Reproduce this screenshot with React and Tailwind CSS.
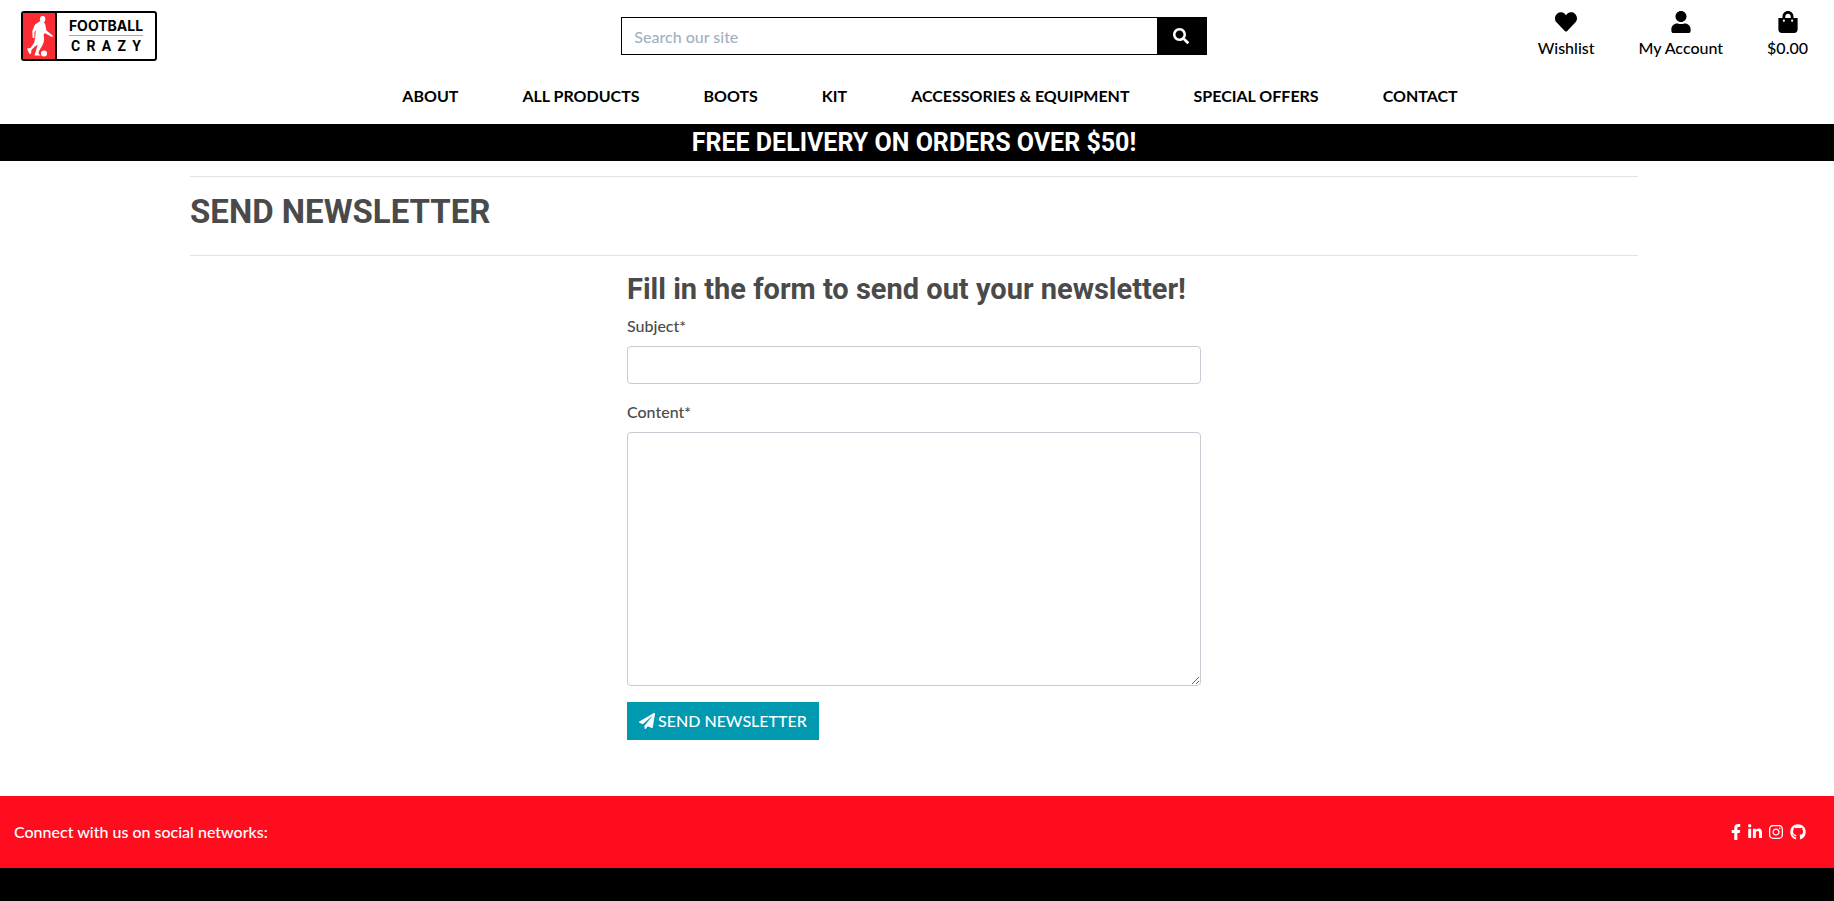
import React from "react";
import { FaSearch, FaHeart, FaUser, FaShoppingBag, FaPaperPlane, FaFacebookF, FaLinkedinIn, FaInstagram, FaGithub } from "react-icons/fa";

const NAV = ["About", "All Products", "Boots", "Kit", "Accessories & Equipment", "Special Offers", "Contact"];

const ACCOUNT_LINKS = [
  { label: "Wishlist", Icon: FaHeart },
  { label: "My Account", Icon: FaUser },
  { label: "$0.00", Icon: FaShoppingBag },
];

const SOCIAL = [
  { label: "Facebook", Icon: FaFacebookF, width: "w-[10px]" },
  { label: "LinkedIn", Icon: FaLinkedinIn, width: "w-[14px]" },
  { label: "Instagram", Icon: FaInstagram, width: "w-[14px]" },
  { label: "GitHub", Icon: FaGithub, width: "w-4" },
];

function Logo() {
  return (
    <a href="#" aria-label="Football Crazy" className="flex h-[50px] w-[136px] rounded-[3px] border-2 border-black bg-white">
      <span className="w-[34px] border-r-2 border-black bg-[#fb2c33]">
        <svg viewBox="0 0 32 46" className="h-full w-full" fill="#fff" aria-hidden="true">
          <ellipse cx="19.6" cy="6.2" rx="2.7" ry="3.3" />
          <path d="M16.5 8.5 L20.5 9 Q22.5 10.5 22.6 13 L23.4 17.5 L30 22.8 L29.2 24.2 L21.8 20 L20.6 22 Q21.6 26 20.6 29.5 Q19.5 33 16 38 L15.5 40.6 L17.5 42.6 L11.5 42.6 L13.5 36 L14.6 31.4 L12 33.5 L8.5 36.8 L8 41 L6.2 40.8 L4 35.5 L7.5 35 L11.3 29.5 L12.4 22.5 L12.6 17 L11.4 19.2 L11.4 25 L9.6 25 L9.3 18 L12 11.5 Z" />
          <circle cx="21" cy="40.5" r="3" />
        </svg>
      </span>
      <span className="flex flex-1 flex-col items-center justify-center text-black">
        <span className="font-['Inter',sans-serif] text-sm leading-3 font-bold">FOOTBALL</span>
        <span className="mt-[3px] mb-1 h-px w-[74px] bg-[#aaa]" />
        <span className="flex w-[70px] justify-between font-['Roboto',sans-serif] text-sm leading-3 font-bold">
          {"CRAZY".split("").map((c) => <span key={c}>{c}</span>)}
        </span>
      </span>
    </a>
  );
}

export default function App() {
  return (
    <div className="min-h-screen bg-white font-['Lato',sans-serif] text-base leading-6 font-medium text-[#4a4a4a]">
      <header className="text-black">
        <div className="grid grid-cols-3 items-start px-[21px] pt-[11px]">
          <Logo />
          <form className="mt-[6px] mr-[9px] ml-[3px] flex h-[38px] border border-black" onSubmit={(e) => e.preventDefault()}>
            <input type="search" aria-label="Search our site" placeholder="Search our site" className="min-w-0 flex-1 px-3 pt-0.5 outline-none placeholder:text-[#9fb1bf]" />
            <button type="submit" aria-label="Search" className="flex w-[49px] items-center justify-center bg-black text-white">
              <FaSearch />
            </button>
          </form>
          <div className="flex justify-end gap-11 pr-[5px]">
            {ACCOUNT_LINKS.map(({ label, Icon }) => (
              <a key={label} href="#" className="flex flex-col items-center gap-[3px]">
                <Icon size={22} />
                <span>{label}</span>
              </a>
            ))}
          </div>
        </div>
        <nav className="flex justify-center gap-16 pt-[23px] pb-4 pl-[26px] font-bold uppercase">
          {NAV.map((item) => <a key={item} href="#">{item}</a>)}
        </nav>
      </header>
      <div className="bg-black pr-[6px] text-center font-['Roboto',sans-serif] text-[25px] leading-[37px] font-bold text-white">
        FREE DELIVERY ON ORDERS OVER $50!
      </div>

      <main className="mr-[196px] ml-[190px] pt-[15px]">
        <h1 className="h-20 border-y border-[#e4e4e4] pt-[15px] font-['Roboto',sans-serif] text-[33px] leading-10 font-bold">SEND NEWSLETTER</h1>
        <form className="mx-auto max-w-[574px] pt-4 pb-14" onSubmit={(e) => e.preventDefault()}>
          <h2 className="mb-2 font-['Roboto',sans-serif] text-[29px] leading-[34px] font-bold">Fill in the form to send out your newsletter!</h2>
          <label htmlFor="subject" className="mb-2 block">Subject*</label>
          <input id="subject" type="text" className="mb-4 block h-[38px] w-full rounded border border-[#c5ccd3] px-3" />
          <label htmlFor="content" className="mb-2 block">Content*</label>
          <textarea id="content" rows={10} className="mb-4 block h-[254px] w-full resize rounded border border-[#c5ccd3] px-3 py-2" />
          <button type="submit" className="flex h-[38px] items-center gap-[3px] bg-[#0099b0] px-3 text-white">
            <FaPaperPlane />SEND NEWSLETTER
          </button>
        </form>
      </main>

      <footer className="bg-black pb-[33px] text-white">
        <div className="flex h-[72px] items-center justify-between bg-[#ff0d1f] pr-7 pl-[14px]">
          <span>Connect with us on social networks:</span>
          <div className="flex items-center gap-[7px]">
            {SOCIAL.map(({ label, Icon, width }) => (
              <a key={label} href="#" aria-label={label}><Icon className={`h-4 ${width}`} /></a>
            ))}
          </div>
        </div>
      </footer>
    </div>
  );
}
